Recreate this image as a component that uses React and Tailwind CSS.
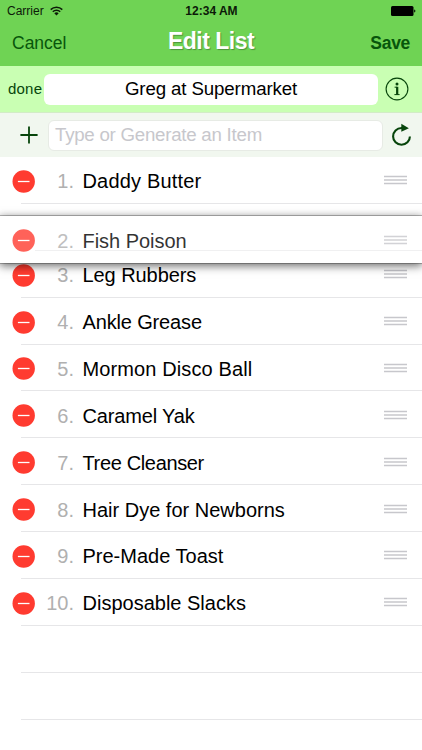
import clsx from 'clsx';

const items = [
  { name: 'Daddy Butter', tracking: 'tracking-[0.17px]' },
  { name: 'Fish Poison', tracking: 'tracking-[-0.04px]' },
  { name: 'Leg Rubbers', tracking: 'tracking-[-0.07px]' },
  { name: 'Ankle Grease', tracking: 'tracking-[-0.15px]' },
  { name: 'Mormon Disco Ball', tracking: 'tracking-[0.12px]' },
  { name: 'Caramel Yak', tracking: 'tracking-[-0.15px]' },
  { name: 'Tree Cleanser', tracking: 'tracking-[-0.35px]' },
  { name: 'Hair Dye for Newborns', tracking: 'tracking-normal' },
  { name: 'Pre-Made Toast', tracking: 'tracking-normal' },
  { name: 'Disposable Slacks', tracking: 'tracking-normal' },
];

// position of the row that is lifted for reordering
const draggedIndex = 1;

const StatusBar = () => (
  <div className="grid h-[22px] grid-cols-3 items-center pl-[7px] pr-[6px] text-[12px] text-[#0c1a08]">
    <div className="flex items-center gap-[6px]">
      <span>Carrier</span>
      <svg width="13" height="10" viewBox="0 0 13 10" fill="none" stroke="currentColor" strokeWidth="1.5">
        <path d="M0.7 3.6a8.2 8.2 0 0 1 11.6 0" />
        <path d="M2.8 5.8a5.2 5.2 0 0 1 7.4 0" />
        <path d="M6.5 9.6L4.3 7.3a3.1 3.1 0 0 1 4.4 0z" fill="currentColor" stroke="none" />
      </svg>
    </div>
    <span className="text-center font-bold">12:34 AM</span>
    <svg className="justify-self-end" width="25" height="10" viewBox="0 0 25 10" fill="#000">
      <rect width="22.5" height="10" rx="1.5" />
      <path d="M23.2 3.4c1.6.4 1.6 2.8 0 3.2z" />
    </svg>
  </div>
);

const NavBar = () => (
  <header className="h-[66px] bg-[#6fd354]">
    <StatusBar />
    <div className="grid h-[42px] grid-cols-[1fr_auto_1fr] items-center px-[12px] text-[17.5px] text-[#07560b]">
      <button className="text-left">Cancel</button>
      <h1 className="pb-[3px] text-[23px] font-bold tracking-[-0.5px] text-white [text-shadow:1px_1px_1px_rgba(0,0,0,0.3)]">
        Edit List
      </h1>
      <button className="text-right font-bold tracking-[-0.3px]">Save</button>
    </div>
  </header>
);

const ListTitle = () => (
  <div className="flex h-[47px] items-center border-b border-[#d2ecc6] bg-[#c9ffb3] pl-[8px] pr-[13px]">
    <span className="w-[36px] text-[15px] tracking-[0.2px] text-[#07450b]">done</span>
    <div className="flex h-[31px] flex-1 items-center justify-center rounded-md bg-white text-[18.7px] tracking-[-0.12px] text-black">
      Greg at Supermarket
    </div>
    <svg className="ml-[7px]" width="24" height="24" viewBox="0 0 24 24" fill="none" stroke="#07450b">
      <circle cx="12" cy="12" r="10.9" strokeWidth="1.1" />
      <circle cx="12" cy="6.9" r="1.5" fill="#07450b" stroke="none" />
      <path d="M9.6 10.2h2.6v7.3M9.4 17.6h5.2" strokeWidth="1" />
      <path d="M12.2 9.8v7.8" strokeWidth="2.2" />
    </svg>
  </div>
);

const AddItem = () => (
  <div className="flex h-[44px] items-center bg-[#f1f7ef] pl-[20px] pr-[9px]">
    <svg width="18" height="18" viewBox="0 0 18 18" stroke="#07450b" strokeWidth="1.8">
      <path d="M9 0.4v17.2M0.4 9h17.2" />
    </svg>
    <div className="ml-[10px] flex h-[31px] flex-1 items-center rounded-md border border-[#e7ebe5] bg-white pl-[6px] text-[18.7px] tracking-[-0.25px] text-[#c7c7cc]">
      Type or Generate an Item
    </div>
    <svg className="ml-[8px]" width="22" height="24" viewBox="0 0 22 24" fill="none">
      <path d="M18.9 13.4a8.4 8.4 0 1 1-8.4-8.4h1" stroke="#07450b" strokeWidth="2.1" />
      <path d="M10.3 0.8l7.6 4.4-7.6 3.6z" fill="#07450b" />
    </svg>
  </div>
);

const ItemRow = ({ index, item }) => (
  <>
    <svg className="shrink-0" width="23" height="23" viewBox="0 0 23 23">
      <circle cx="11.7" cy="11.5" r="11.2" fill="#ff3b30" />
      <path d="M5.9 11.5h11.6" stroke="#fff" strokeWidth="1.3" />
    </svg>
    <span className="w-[39px] text-right text-[20px] text-[#b0b0b0]">{index}.</span>
    <span className={clsx('ml-[8.5px] flex-1 whitespace-nowrap text-[20px] text-black', item.tracking)}>
      {item.name}
    </span>
    <svg className="mb-[2px] mr-[15px]" width="23" height="10" viewBox="0 0 23 10" stroke="#c7c7cc" strokeWidth="1.4">
      <path d="M0 1.5h23M0 5h23M0 8.5h23" />
    </svg>
  </>
);

const ItemList = () => (
  <ul className="bg-white">
    {items.map((item, i) => (
      <li key={item.name} className="relative h-[46.88px]">
        {i === draggedIndex ? (
          <div className="absolute inset-x-0 top-[12px] z-10 h-[47px] bg-white shadow-[0_0_7px_1px_rgba(0,0,0,0.15),0_3px_9px_rgba(0,0,0,0.5)] outline outline-[#00000040]">
            <div className="flex h-full items-center pb-px pl-[12px] pt-[4px] opacity-80">
              <ItemRow index={i + 1} item={item} />
            </div>
            {/* separator of the slot showing through the lifted row */}
            <div className="absolute bottom-[12px] left-[35px] right-0 h-px bg-[#f0f0f1]" />
          </div>
        ) : (
          <>
            <div className="flex h-full items-center pl-[12px] pt-[2px]">
              <ItemRow index={i + 1} item={item} />
            </div>
            <div className="absolute bottom-0 left-[21px] right-0 h-px bg-[#e6e6e8]" />
          </>
        )}
      </li>
    ))}
    {[0, 1].map((n) => (
      <li key={n} className="ml-[21px] h-[46.88px] border-b border-[#e6e6e8]" />
    ))}
  </ul>
);

export default function App() {
  return (
    <div className="h-[750px] w-[422px] overflow-hidden bg-white font-['Liberation_Sans',Arial,sans-serif]">
      <NavBar />
      <ListTitle />
      <AddItem />
      <ItemList />
    </div>
  );
}
